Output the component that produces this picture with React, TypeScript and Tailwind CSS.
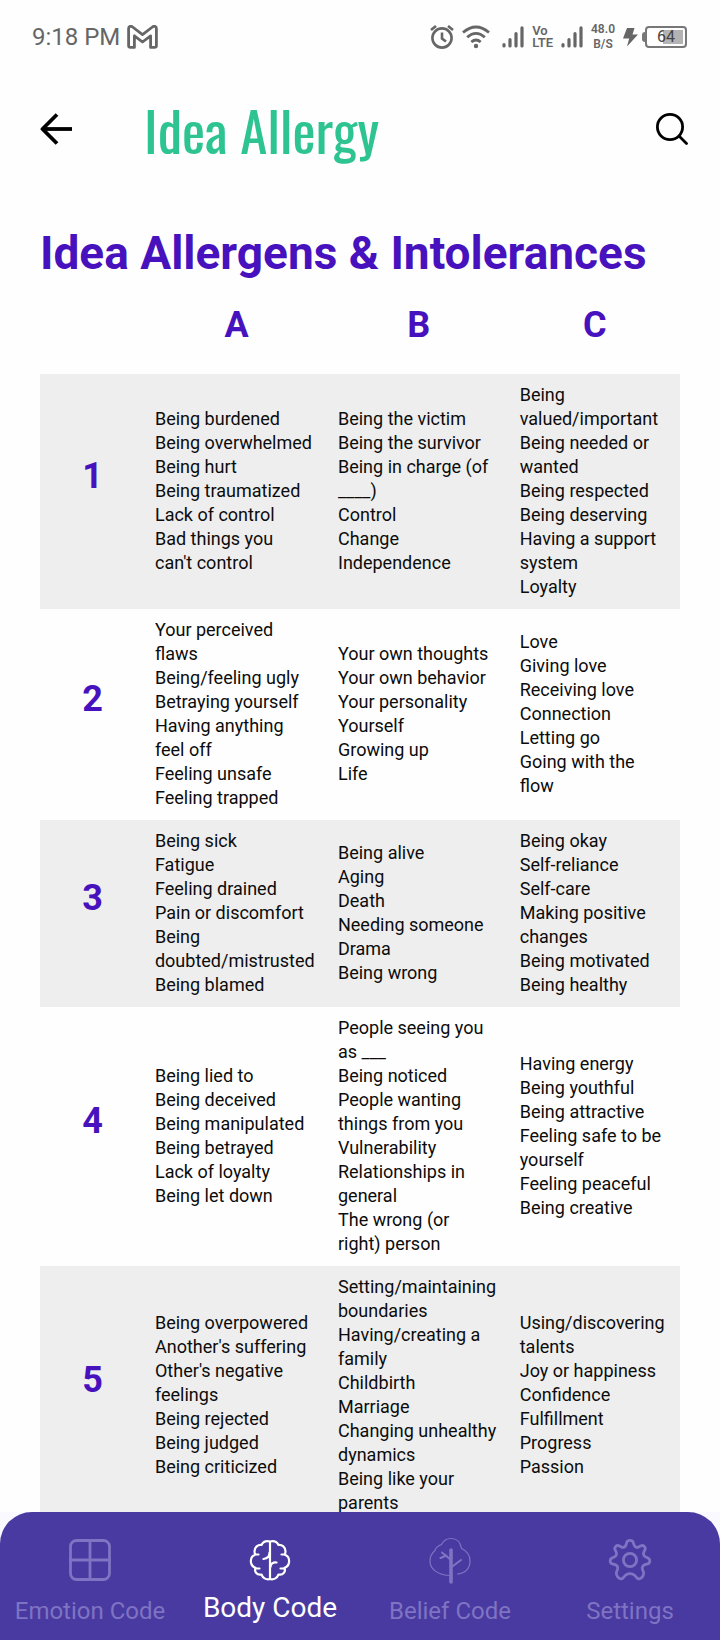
import type { ReactNode } from "react";

type Row = { label: string; cells: [string[], string[], string[]] };

const rows: Row[] = [
  {
    label: "1",
    cells: [
      ["Being burdened", "Being overwhelmed", "Being hurt", "Being traumatized", "Lack of control", "Bad things you can't\u00a0control"],
      ["Being the victim", "Being the survivor", "Being in charge (of ____)", "Control", "Change", "Independence"],
      ["Being valued/important", "Being needed or wanted", "Being respected", "Being deserving", "Having a support system", "Loyalty"],
    ],
  },
  {
    label: "2",
    cells: [
      ["Your perceived flaws", "Being/feeling ugly", "Betraying yourself", "Having anything feel\u00a0off", "Feeling unsafe", "Feeling trapped"],
      ["Your own thoughts", "Your own behavior", "Your personality", "Yourself", "Growing up", "Life"],
      ["Love", "Giving love", "Receiving love", "Connection", "Letting go", "Going with the flow"],
    ],
  },
  {
    label: "3",
    cells: [
      ["Being sick", "Fatigue", "Feeling drained", "Pain or discomfort", "Being doubted/mistrusted", "Being blamed"],
      ["Being alive", "Aging", "Death", "Needing someone", "Drama", "Being wrong"],
      ["Being okay", "Self-reliance", "Self-care", "Making positive changes", "Being motivated", "Being healthy"],
    ],
  },
  {
    label: "4",
    cells: [
      ["Being lied to", "Being deceived", "Being manipulated", "Being betrayed", "Lack of loyalty", "Being let down"],
      ["People seeing you as ___", "Being noticed", "People wanting things from you", "Vulnerability", "Relationships in general", "The wrong (or right)\u00a0person"],
      ["Having energy", "Being youthful", "Being attractive", "Feeling safe to be yourself", "Feeling peaceful", "Being creative"],
    ],
  },
  {
    label: "5",
    cells: [
      ["Being overpowered", "Another's suffering", "Other's negative feelings", "Being rejected", "Being judged", "Being criticized"],
      ["Setting/maintaining boundaries", "Having/creating a family", "Childbirth", "Marriage", "Changing unhealthy dynamics", "Being like your parents"],
      ["Using/discovering talents", "Joy or happiness", "Confidence", "Fulfillment", "Progress", "Passion"],
    ],
  },
];

/* Words joined by a slash stay together on one line. */
function Phrase({ text }: { text: string }) {
  return (
    <li>
      {text.split(/(\S+\/\S+)/).map((part, i) =>
        part.includes("/") ? (
          <span key={i} className="whitespace-nowrap">
            {part}
          </span>
        ) : (
          part
        ),
      )}
    </li>
  );
}

function SignalBars() {
  return (
    <svg className="h-6 w-[22px]" viewBox="0 0 22 24" fill="none" stroke="currentColor" strokeWidth="3.2" strokeLinecap="round">
      <path d="M2 19.500V21M8 14.500V21M14 8.500V21M20 2.800V21" />
    </svg>
  );
}

function StatusBar() {
  return (
    <div className="flex h-[73px] shrink-0 items-center justify-between pr-[33px] pl-8 text-[#666666]">
      <div className="flex items-center gap-[7px]">
        <span className="text-[24px] leading-6">9:18 PM</span>
        <svg className="h-6 w-[31px]" viewBox="0 0 31 24" fill="none" stroke="currentColor" strokeWidth="2.8" strokeLinejoin="round">
          <path d="M1.6 3.6C1.6 1.2 4 .8 5.6 2L15.5 9.6 25.4 2C27 .8 29.400 1.200 29.400 3.600V20.500Q29.400 22.400 27.500 22.400H23.600V10.800L15.500 17 7.400 10.800V22.400H3.500Q1.600 22.400 1.600 20.500Z" />
        </svg>
      </div>
      <div className="flex items-center">
        <svg className="mr-2 h-6 w-6" viewBox="0 0 24 24" fill="none" stroke="currentColor" strokeWidth="2.6">
          <circle cx="12" cy="13" r="9.600" />
          <path d="M12 7.500V13.500L16 16.500M1 5 6 1M23 5 18 1" />
        </svg>
        <svg className="mr-3 h-6 w-7" viewBox="0 0 28 24" fill="none" stroke="currentColor" strokeWidth="2.800">
          <path d="M1 7.500Q14-3.500 27 7.500M5.200 12.300Q14 4.500 22.800 12.300M9.300 17Q14 13 18.700 17" />
          <circle cx="14" cy="21" r="2.200" fill="currentColor" stroke="none" />
        </svg>
        <SignalBars />
        <span className="mx-2 text-[13px] leading-3 font-semibold">
          Vo
          <br />
          LTE
        </span>
        <SignalBars />
        <span className="mx-2 text-center text-[12px] leading-[15px] font-semibold">
          48.0
          <br />
          B/S
        </span>
        <svg className="mr-1 h-5 w-[15px]" viewBox="0 0 15 20" fill="currentColor">
          <path d="M4 1H11.500L9.500 7.500H15L4 19.500 6.200 11.500H0Z" />
        </svg>
        <span className="h-[10px] w-[3px] rounded-l-sm bg-[#777777]" />
        <span className="flex h-[22px] w-[42px] rounded-[4px] border-2 border-[#777777] p-[2px]">
          <span className="flex w-full items-center justify-center bg-linear-to-r from-white from-40% to-[#b3b3b3] to-40% text-[16px] leading-[14px] text-[#444444]">
            64
          </span>
        </span>
      </div>
    </div>
  );
}

function TabItem({ label, active, children }: { label: string; active?: boolean; children: ReactNode }) {
  return (
    <a
      href="#"
      aria-current={active ? "page" : undefined}
      className={
        active
          ? "flex flex-col items-center gap-2 text-[28px] leading-8 whitespace-nowrap text-white"
          : "flex flex-col items-center gap-[11px] text-[24px] leading-8 whitespace-nowrap text-[#7f73c3]"
      }
    >
      <svg className="h-12 w-12" viewBox="0 0 48 48" fill="none" stroke="currentColor" strokeWidth="2.800" strokeLinecap="round" strokeLinejoin="round">
        {children}
      </svg>
      {label}
    </a>
  );
}

export default function App() {
  return (
    <div className="flex h-dvh flex-col bg-[#fefefe] font-['Roboto',sans-serif]">
      <StatusBar />
      <header className="flex h-[111px] shrink-0 items-center pr-8 pl-10">
        <button type="button" aria-label="Back">
          <svg className="h-8 w-8" viewBox="0 0 32 32" fill="none" stroke="black" strokeWidth="3.800">
            <path d="M32 16H3" />
            <path d="M17 1.500 2.500 16 17 30.500" strokeLinejoin="round" />
          </svg>
        </button>
        <h1 className="ml-[72px] flex-1 font-['Oswald','Roboto_Condensed',sans-serif] text-[55px] leading-[72px] text-[#2dc491]">Idea Allergy</h1>
        <button type="button" aria-label="Search">
          <svg className="h-8 w-8" viewBox="0 0 32 32" fill="none" stroke="black" strokeWidth="2.800" strokeLinecap="round">
            <circle cx="14" cy="14" r="12.600" />
            <path d="M23.500 23.500 30.500 30.500" />
          </svg>
        </button>
      </header>

      <main className="min-h-0 flex-1 overflow-y-auto px-10 pt-10 [scrollbar-width:none]">
        <h2 className="text-[46px] leading-[58px] font-bold whitespace-nowrap text-[#4712bd]">Idea Allergens &amp; Intolerances</h2>
        <table className="w-full table-fixed text-left">
          <colgroup>
            <col className="w-[16.4%]" />
            <col className="w-[28.6%]" />
            <col className="w-[28.4%]" />
            <col className="w-[26.6%]" />
          </colgroup>
          <thead>
            <tr className="h-[92px] text-center align-top text-[36px] leading-[42px] text-[#4712bd]">
              <td />
              {["A", "B", "C"].map((name) => (
                <th key={name} scope="col" className="pt-[22px] font-bold">
                  {name}
                </th>
              ))}
            </tr>
          </thead>
          <tbody>
            {rows.map((row) => (
              <tr key={row.label} className="odd:bg-[#eeeeee]">
                <th scope="row" className="pb-8 text-center text-[36px] leading-[42px] font-bold text-[#4712bd]">
                  {row.label}
                </th>
                {row.cells.map((items, i) => (
                  <td key={i} className="px-[10px] pt-[9px] pb-[10px] align-middle text-[18px] leading-6 text-[#0c0c0c]">
                    <ul>
                      {items.map((item) => (
                        <Phrase key={item} text={item} />
                      ))}
                    </ul>
                  </td>
                ))}
              </tr>
            ))}
          </tbody>
        </table>
      </main>

      <div className="shrink-0 bg-linear-to-r from-[#f9f9ff] from-5% via-[#eeeeee] via-5% to-[#f9f9ff] to-95%">
        <nav className="grid h-32 grid-cols-4 rounded-t-[32px] bg-[#483aa0] pt-6">
          <TabItem label="Emotion Code">
            <rect x="4.500" y="4.500" width="39" height="39" rx="6" />
            <path d="M24 4.500V43.500M4.500 24H43.500" />
          </TabItem>
          <TabItem label="Body Code" active>
            <path
              strokeWidth="2.200"
              d="M24 5.500V43M24 5.500C20 4.500 17 6 15.500 9C12 8.500 8.500 11 8.500 15.500C8.500 17 9 18 9.500 18.500C5.500 20 4.500 23 5 26.500C5.500 29.500 7 31 9.500 31.700C8 36 11 39.500 15.500 38.500C17 42.500 20.500 44 24 43C27.500 44 31 42.500 32.500 38.500C37 39.500 40 36 38.500 31.700C41 31 42.500 29.500 43 26.500C43.500 23 42.500 20 38.500 18.500C39 18 39.500 17 39.500 15.500C39.500 11 36 8.500 32.500 9C31 6 28 4.500 24 5.500M9.500 18.500H12.500M9.500 32.500H13.500M38.500 18.500H35.500M38.500 32.500H34.500M17.500 23C21 22.500 23.500 20 23.500 16.500M24.500 31C24.500 28 27 26 30.500 26.500"
            />
          </TabItem>
          <TabItem label="Belief Code">
            <path strokeWidth="3.600" d="M25 14V46" />
            <path strokeWidth="2" d="M25 24 16 16.500M14.500 22 20.500 19.500M25 31.500 35 24" />
            <path strokeWidth="1.200" d="M23 39.500C11 38.500 4 33 4 25C4 20.500 6 17 9 14.500C9.500 11 13 9.500 15.500 8.500C18 3.500 21 2.500 25 2.500C30.500 2.500 34.500 6 35.500 12.500C41 15 44 20 44 25C44 32.500 39 37.500 31.500 38" />
          </TabItem>
          <TabItem label="Settings">
            <path d="M20.800 6.300C21.800 3.700 26.200 3.700 27.200 6.300L28 8.900C28.600 11 30.800 12 32.700 11L34.900 9.800C37.400 8.600 40.200 11.300 38.900 13.900L37.800 16.200C36.900 18.100 37.800 20.300 39.800 21L42 22.100C44.600 23.200 44.300 27 41.700 27.800L38.900 28.600C36.800 29.200 35.800 31.400 36.500 33.400L37.500 36C38.400 38.600 36 42.300 33.500 42.800C30.500 43.500 29.800 39.500 27.500 38.500C25.500 37.500 22.500 37.500 20.500 38.500C18.200 39.500 17.500 43.500 14.500 42.800C12 42.300 9.600 38.600 10.500 36L11.500 33.400C12.200 31.400 11.200 29.200 9.100 28.600L6.300 27.800C3.700 27 3.400 23.200 6 22.100L8.200 21C10.200 20.300 11.100 18.100 10.200 16.200L9.100 13.900C7.800 11.300 10.600 8.600 13.100 9.800L15.300 11C17.200 12 19.400 11 20 8.900Z" />
            <circle cx="24" cy="24" r="6.600" />
          </TabItem>
        </nav>
      </div>
    </div>
  );
}
